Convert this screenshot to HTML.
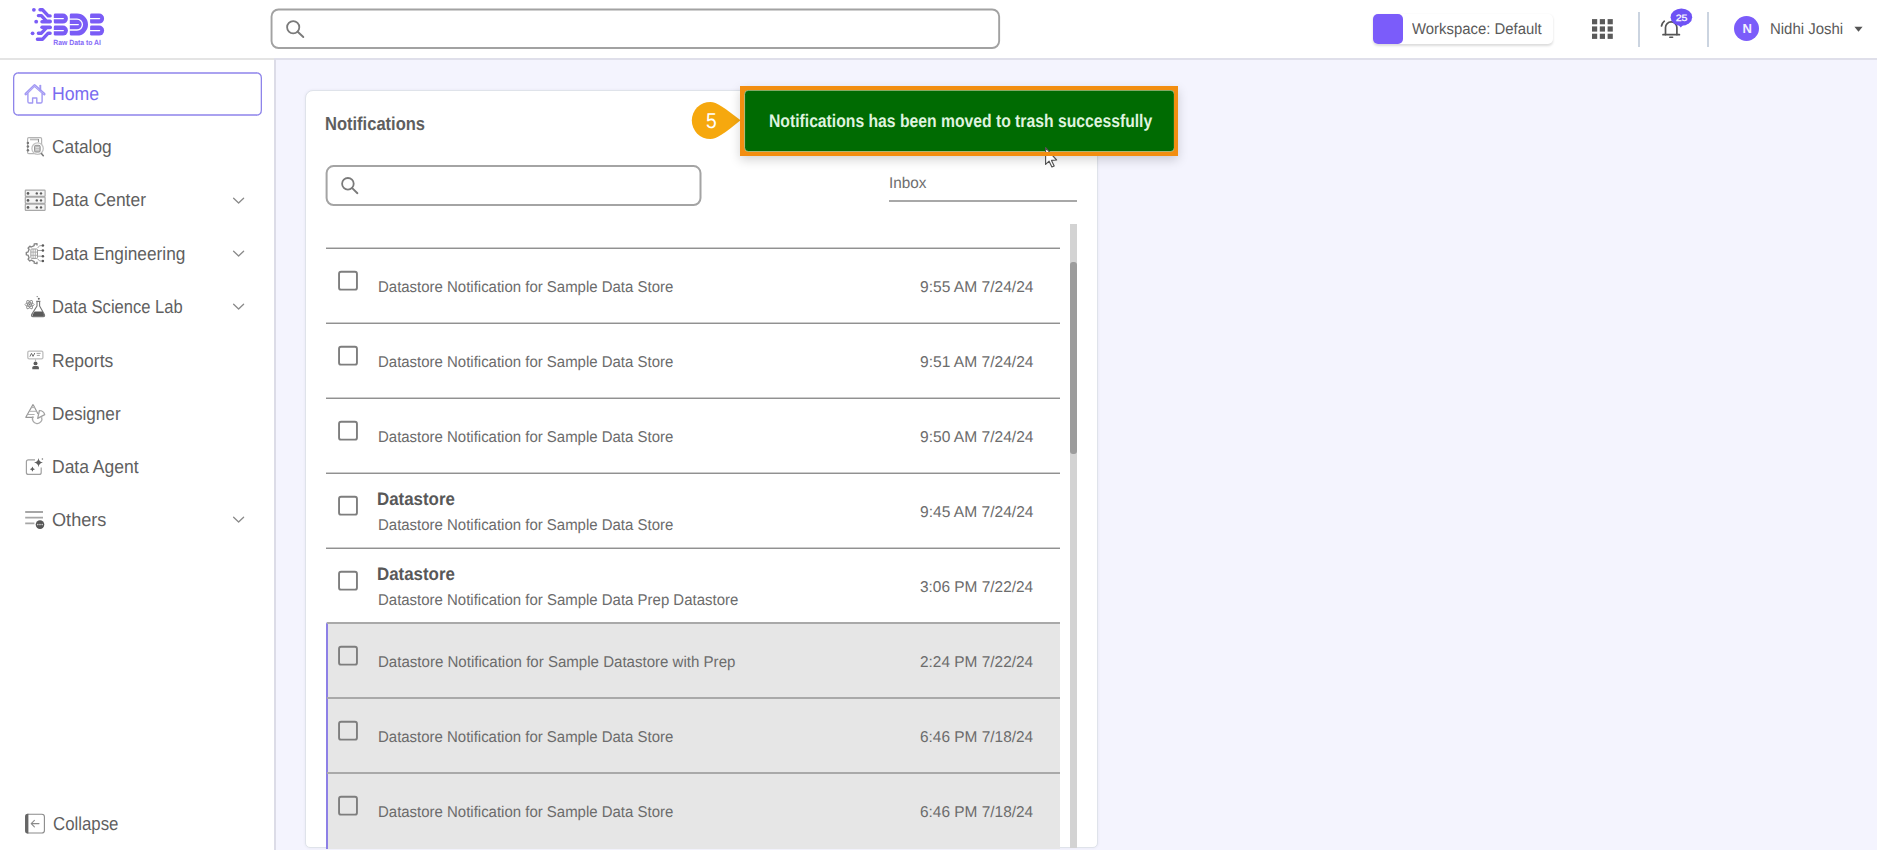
<!DOCTYPE html>
<html>
<head>
<meta charset="utf-8">
<title>Notifications</title>
<style>
*{box-sizing:border-box;margin:0;padding:0}
html,body{width:1877px;height:850px;overflow:hidden}
body{font-family:"Liberation Sans",sans-serif;text-rendering:geometricPrecision;background:#f4f4fe;position:relative;color:#666}
.a{position:absolute}
.t{position:absolute;white-space:nowrap;transform-origin:0 50%}
svg{position:absolute;overflow:visible}
#header{left:0;top:0;width:1877px;height:58px;background:#fff}
#hline{left:0;top:58px;width:1877px;height:2px;background:#dfdfea}
#hline2{left:0;top:58px;width:274px;height:2px;background:#e4e4e4}
#sidebar{left:0;top:60px;width:274px;height:790px;background:#fff}
#sline{left:274px;top:59px;width:2px;height:791px;background:#dcdce7}
#card{left:305px;top:89.5px;width:792.5px;height:758.5px;background:#fff;border:1.5px solid #dfe3ea;border-radius:8px 8px 5px 5px;box-shadow:0 0 3px rgba(40,40,80,.07)}
.l1{left:326px;width:734px;height:1px;background:rgba(0,0,0,.2)}
.l2{left:326px;width:734px;height:1px;background:rgba(0,0,0,.43)}
.g1{left:327px;width:733px;height:2px;background:#a9a9a9}
.rowbg{left:327px;width:733px;background:#e6e6e6}
.rowbar{left:326px;width:2.2px;background:#8d80e6;border-radius:2px 0 0 0}
#track{left:1070px;top:224px;width:7px;height:624px;background:#d3d3d3}
#thumb{left:1070px;top:262px;width:7px;height:191.5px;background:#9c9c9c;border-radius:3px}
#inboxline{left:889px;top:200px;width:188px;height:2px;background:#a8a8a8}
#wschip{left:1373px;top:14px;width:179.5px;height:30px;background:#fff;border-radius:5px;box-shadow:0 1.5px 2.5px rgba(0,0,0,.14)}
#wssq{left:1373px;top:13.5px;width:30px;height:30px;background:#7b5cfa;border-radius:5px}
.vdiv{top:11.5px;width:2.4px;height:35px;background:#cbd4e0}
#avatar{left:1734px;top:16.3px;width:25px;height:25px;border-radius:50%;background:#7b5cfa}
#toastout{left:740px;top:86px;width:438px;height:70px;background:#f28e10;box-shadow:0 4px 10px rgba(0,0,0,.17)}

</style>
</head>
<body>
<div id="header" class="a"></div><div id="hline" class="a"></div><div id="hline2" class="a"></div>
<div id="sidebar" class="a"></div><div id="sline" class="a"></div>
<svg style="left:0;top:0" width="1877" height="130" viewBox="0 0 1877 130">
 <rect x="271.55" y="9.45" width="727.6" height="38.6" rx="7" fill="#fff" stroke="#a2a2a2" stroke-width="1.9"/>
 <rect x="13.9" y="73.05" width="247.2" height="41.9" rx="5" fill="#fff" stroke="none"/>
 <path d="M18.5 73.05 H256.5 M18.5 114.95 H256.5" stroke="#aaa2f0" stroke-width="1.9" fill="none"/>
 <path d="M19 72.85 Q13.65 72.85 13.65 78 V110 Q13.65 115.15 19 115.15 M256 72.85 Q261.35 72.85 261.35 78 V110 Q261.35 115.15 256 115.15" stroke="#8e84ea" stroke-width="1.3" fill="none"/>
</svg>
<div id="card" class="a"></div><svg style="left:320px;top:160px" width="390" height="50" viewBox="320 160 390 50">
 <rect x="326.6" y="166.1" width="373.9" height="38.9" rx="7" fill="#fff" stroke="#a4a4a4" stroke-width="2"/>
</svg><div id="inboxline" class="a"></div>
<div class="a rowbg" style="top:622px;height:227px"></div><div class="a rowbar" style="top:622px;height:227px"></div>
<div class="a l1" style="top:247px"></div><div class="a l2" style="top:248px"></div>
<div class="a l1" style="top:322px"></div><div class="a l2" style="top:323px"></div>
<div class="a l1" style="top:397px"></div><div class="a l2" style="top:398px"></div>
<div class="a l1" style="top:472px"></div><div class="a l2" style="top:473px"></div>
<div class="a l1" style="top:547px"></div><div class="a l2" style="top:548px"></div>
<div class="a g1" style="top:622px"></div>
<div class="a g1" style="top:697px"></div>
<div class="a g1" style="top:772px"></div>
<svg style="left:330px;top:240px" width="40" height="610" viewBox="330 240 40 610"><g fill="none" stroke="#7e7e7e" stroke-width="1.9"><rect x="339.05" y="271.75" width="17.9" height="17.9" rx="2"/><rect x="339.05" y="346.75" width="17.9" height="17.9" rx="2"/><rect x="339.05" y="421.75" width="17.9" height="17.9" rx="2"/><rect x="339.05" y="496.75" width="17.9" height="17.9" rx="2"/><rect x="339.05" y="571.75" width="17.9" height="17.9" rx="2"/><rect x="339.05" y="646.75" width="17.9" height="17.9" rx="2"/><rect x="339.05" y="721.75" width="17.9" height="17.9" rx="2"/><rect x="339.05" y="796.75" width="17.9" height="17.9" rx="2"/></g></svg>
<div id="track" class="a"></div><div id="thumb" class="a"></div>
<div id="wschip" class="a"></div><div id="wssq" class="a"></div>
<div class="a vdiv" style="left:1637.8px"></div><div class="a vdiv" style="left:1706.8px"></div>
<div id="avatar" class="a"></div>
<svg style="left:688px;top:98px" width="56" height="46" viewBox="688 98 56 46">
 <path d="M710.4 101.9 C716.5 101.9 724.5 107.5 740.6 120.3 C724.5 133.3 716.5 139.1 710.4 139.1 A18.6 18.6 0 0 1 710.4 101.9Z" fill="#f6a80e"/>
</svg>
<div id="toastout" class="a"></div><svg style="left:740px;top:86px" width="438" height="70" viewBox="740 86 438 70">
 <rect x="744.6" y="90.3" width="429.7" height="61.3" rx="4" fill="#006b02" stroke="#d6e4cf" stroke-width=".6"/>
</svg>
<!--ICONS--><!-- logo -->
<svg style="left:0;top:0" width="120" height="58" viewBox="0 0 120 58">
 <g fill="#7a5cf6">
  <circle cx="33.9" cy="9.8" r="1.9"/><circle cx="36.2" cy="21.7" r="1.9"/><circle cx="32.6" cy="33.3" r="1.9"/>
 </g>
 <g fill="none" stroke="#7a5cf6" stroke-width="3.4" stroke-linecap="round" stroke-linejoin="round">
  <path d="M40 9.8 H42.6 L48.2 15.9 H50.1"/>
  <path d="M38.4 15.6 H41.4 L46.6 21.3 H50.1"/>
  <path d="M42 21.7 H50.1"/>
  <path d="M42 27.3 H50.1"/>
  <path d="M38.4 33.2 H41.4 L46.6 27.6 H50.1"/>
  <path d="M37.4 39.2 H42.6 L48.2 33.2 H50.1"/>
 </g>
 <g fill="#7a5cf6">
  <path d="M55.2 13.6 H62.9 a5 5 0 0 1 0 10 H55.2 a1.4 1.4 0 0 1 -1.4 -1.4 V15 a1.4 1.4 0 0 1 1.4 -1.4z"/>
  <path d="M55.2 25.6 H62.9 a5 5 0 0 1 0 10 H55.2 a1.4 1.4 0 0 1 -1.4 -1.4 V27 a1.4 1.4 0 0 1 1.4 -1.4z"/>
  <path d="M91.5 13.6 H99.1 a5 5 0 0 1 0 10 H91.5 a1.4 1.4 0 0 1 -1.4 -1.4 V15 a1.4 1.4 0 0 1 1.4 -1.4z"/>
  <path d="M91.5 25.6 H99.1 a5 5 0 0 1 0 10 H91.5 a1.4 1.4 0 0 1 -1.4 -1.4 V27 a1.4 1.4 0 0 1 1.4 -1.4z"/>
  <path d="M71.2 13.6 H77 a11 11 0 0 1 0 22 H71.2 a1.4 1.4 0 0 1 -1.4 -1.4 V15 a1.4 1.4 0 0 1 1.4 -1.4z"/>
 </g>
 <g fill="none" stroke="#fff" stroke-width="1.3" stroke-linecap="round">
  <path d="M53.5 18.6 H63.3"/><path d="M53.5 30.6 H63.3"/>
  <path d="M89.8 18.6 H99.6"/><path d="M89.8 30.6 H99.6"/>
  <path d="M69.5 19.2 H77 a5.4 5.4 0 0 1 0 10.8 H69.5"/>
  <path d="M69.5 24.6 H78.3"/>
 </g>
 <text x="53.3" y="44.6" font-family="Liberation Sans, sans-serif" font-size="7.5" font-weight="bold" fill="#8468f7" textLength="47.6" lengthAdjust="spacingAndGlyphs">Raw Data to AI</text>
</svg>

<!-- header search magnifier -->
<svg style="left:283px;top:17px" width="24" height="24" viewBox="283 17 24 24">
 <circle cx="293.2" cy="27.2" r="6.1" fill="none" stroke="#7a7a7a" stroke-width="1.8"/>
 <path d="M297.7 31.7 L303.3 37" stroke="#7a7a7a" stroke-width="1.9" stroke-linecap="round"/>
</svg>
<!-- notif search magnifier -->
<svg style="left:338px;top:174px" width="24" height="24" viewBox="338 174 24 24">
 <circle cx="347.9" cy="183.8" r="5.8" fill="none" stroke="#7a7a7a" stroke-width="1.8"/>
 <path d="M352.2 188.1 L357.4 193.2" stroke="#7a7a7a" stroke-width="1.9" stroke-linecap="round"/>
</svg>

<!-- grid -->
<svg style="left:1590px;top:17px" width="26" height="24" viewBox="1590 17 26 24">
 <g fill="#5a5a5a">
  <rect x="1592" y="19.1" width="5.2" height="5.2"/><rect x="1599.8" y="19.1" width="5.2" height="5.2"/><rect x="1607.6" y="19.1" width="5.2" height="5.2"/>
  <rect x="1592" y="26.4" width="5.2" height="5.2"/><rect x="1599.8" y="26.4" width="5.2" height="5.2"/><rect x="1607.6" y="26.4" width="5.2" height="5.2"/>
  <rect x="1592" y="33.7" width="5.2" height="5.2"/><rect x="1599.8" y="33.7" width="5.2" height="5.2"/><rect x="1607.6" y="33.7" width="5.2" height="5.2"/>
 </g>
</svg>

<!-- bell + badge -->
<svg style="left:1655px;top:5px" width="44" height="40" viewBox="1655 5 44 40">
 <g fill="none" stroke="#555" stroke-width="1.7" stroke-linecap="round">
  <path d="M1665.5 34.6 V27.6 a5.7 5.7 0 0 1 11.4 0 V34.6"/>
  <path d="M1663 34.7 H1679.4"/>
  <path d="M1661.5 26 Q1662.3 22.8 1664.3 21.2"/>
  <path d="M1669.8 37.3 H1672.6" stroke-width="1.6"/>
 </g>
 <ellipse cx="1681.4" cy="17.2" rx="10.8" ry="8.6" fill="#6e52f5"/>
 <path d="M1678.5 25 L1680.8 27.4 L1683 25z" fill="#6e52f5"/>
 <text x="1675.7" y="20.5" font-family="Liberation Sans, sans-serif" font-size="9.2" fill="#fff" stroke="#fff" stroke-width=".25" textLength="11.8" lengthAdjust="spacingAndGlyphs">25</text>
</svg>

<!-- avatar N -->
<svg style="left:1734px;top:16px" width="26" height="26" viewBox="1734 16 26 26">
 <text x="1742.6" y="32.6" font-family="Liberation Sans, sans-serif" font-size="13" font-weight="bold" fill="#f3efff" textLength="9.4" lengthAdjust="spacingAndGlyphs">N</text>
</svg>
<!-- caret -->
<svg style="left:1850px;top:24px" width="16" height="10" viewBox="1850 24 16 10">
 <path d="M1854.4 26.7 H1862.6 L1858.5 31.8z" fill="#555"/>
</svg>
<!-- home icon -->
<svg style="left:22px;top:82px" width="26" height="24" viewBox="22 82 26 24">
 <g fill="none" stroke="#a198f3" stroke-linecap="round" stroke-linejoin="round">
  <path d="M25.8 94 L34.6 85.4 L44.2 94" stroke-width="2.7"/>
  <path d="M26.2 94 L34.6 85.8 L43.8 94" stroke="#cfc9fa" stroke-width=".7"/>
  <path d="M40.3 85.6 V90" stroke-width="1.9"/>
  <path d="M27.9 93.6 V101.4 Q27.9 103 29.5 103 H32.6 V98 H36.8 V103 H40.5 Q42.1 103 42.1 101.4 V93.6" stroke-width="1.4"/>
 </g>
</svg>
<!-- catalog icon -->
<svg style="left:24px;top:136px" width="22" height="22" viewBox="24 136 22 22">
 <rect x="27.6" y="137.6" width="14" height="16.1" rx="1.2" fill="none" stroke="#b4b4b4" stroke-width="1.2"/>
 <path d="M30 139.5 H38.6" stroke="#bdbdbd" stroke-width="1.7" fill="none"/>
 <path d="M38.5 139 V142.3" stroke="#909090" stroke-width="1.1" fill="none"/>
 <circle cx="37.6" cy="148.6" r="5.7" fill="#fff" stroke="#c2c2c2" stroke-width="1.3"/>
 <rect x="34.5" y="145.3" width="5.7" height="6.8" rx="1.3" fill="#bcbcbc" stroke="#8e8e8e" stroke-width=".9"/>
 <path d="M35.6 147.6 H39.1 M35.6 149.8 H39.1" stroke="#e4e4e4" stroke-width=".9" fill="none"/>
 <path d="M41.4 153.5 L43.3 155.7" stroke="#7a7a7a" stroke-width="1.6" stroke-linecap="round" fill="none"/>
 <g fill="#787878"><circle cx="27.9" cy="142.9" r="1.25"/><circle cx="27.9" cy="146.6" r="1.25"/><circle cx="27.9" cy="150.2" r="1.25"/></g>
</svg>
<!-- data center icon -->
<svg style="left:24px;top:188px" width="24" height="24" viewBox="24 188 24 24">
 <g fill="#f4f4f4" stroke="#a8a8a8" stroke-width="1.2">
  <rect x="25.3" y="190.2" width="19.8" height="6.2" rx=".6"/>
  <rect x="25.3" y="197.2" width="19.8" height="6.2" rx=".6"/>
  <rect x="25.3" y="204.2" width="19.8" height="6.2" rx=".6"/>
 </g>
 <g fill="#5c5c5c">
  <circle cx="28" cy="193.4" r="1.35"/><circle cx="36.8" cy="193.4" r="1.2"/><circle cx="41" cy="193.4" r="1.2"/>
  <circle cx="28" cy="200.4" r="1.35"/><circle cx="36.8" cy="200.4" r="1.2"/><circle cx="41" cy="200.4" r="1.2"/>
  <circle cx="28" cy="207.4" r="1.35"/><circle cx="36.8" cy="207.4" r="1.2"/><circle cx="41" cy="207.4" r="1.2"/>
 </g>
</svg>
<!-- data engineering icon -->
<svg style="left:24px;top:242px" width="22" height="24" viewBox="24 242 22 24">
 <path d="M37.0 245.1 L37.0 243.6 L34.2 244.0 L34.2 245.6 L31.3 247.0 L29.8 246.2 L28.0 248.1 L29.1 249.3 L28.0 252.1 L26.3 252.4 L26.3 254.8 L28.0 255.1 L29.1 257.9 L28.0 259.1 L29.8 261.0 L31.3 260.2 L34.2 261.6 L34.2 263.2 L37.0 263.6 L37.0 262.1" fill="none" stroke="#858585" stroke-width="1.35" stroke-linejoin="round" stroke-linecap="round"/>
 <rect x="30.9" y="249" width="6.6" height="9.4" rx=".8" fill="#fff" stroke="#9a9a9a" stroke-width="1"/>
 <path d="M30.9 252.1 H37.5 M30.9 255.3 H37.5 M33.1 249 V258.4 M35.3 249 V258.4" stroke="#a8a8a8" stroke-width=".9" fill="none"/>
 <path d="M37.6 248 L39.6 245.7 H42 M37.8 250.5 H42 M37.8 256.2 H42 M37.6 258.8 L39.6 261 H42" stroke="#9a9a9a" stroke-width=".9" fill="none"/>
 <g fill="#585858"><circle cx="42.9" cy="245.6" r="1.25"/><circle cx="42.9" cy="250.4" r="1.25"/><circle cx="42.9" cy="256.2" r="1.25"/><circle cx="42.9" cy="261" r="1.25"/></g>
</svg>
<!-- data science lab icon -->
<svg style="left:24px;top:294px" width="24" height="26" viewBox="24 294 24 26">
 <g fill="none" stroke="#8c8c8c" stroke-width=".9">
  <ellipse cx="29.6" cy="304.6" rx="4.6" ry="1.8"/>
  <ellipse cx="29.6" cy="304.6" rx="4.6" ry="1.8" transform="rotate(60 29.6 304.6)"/>
  <ellipse cx="29.6" cy="304.6" rx="4.6" ry="1.8" transform="rotate(120 29.6 304.6)"/>
 </g>
 <circle cx="29.6" cy="304.6" r="1" fill="#777"/>
 <path d="M36.2 301.4 H40.4 M37 301.6 V306 L31.6 314.6 Q31 316.6 33 316.6 H43.2 Q45.2 316.6 44.4 314.6 L39.6 306 V301.6" fill="#fff" stroke="#777" stroke-width="1.1" stroke-linejoin="round"/>
 <path d="M34.6 311.6 H42.6 L44 314.4 Q44.6 316 43 316 H33.2 Q31.8 316 32.6 314.4z" fill="#5a5a5a"/>
 <circle cx="38.8" cy="298.8" r="1" fill="#666"/><circle cx="37.2" cy="296.6" r=".7" fill="#777"/>
</svg>
<!-- reports icon -->
<svg style="left:24px;top:348px" width="22" height="24" viewBox="24 348 22 24">
 <rect x="27.8" y="351.1" width="15.1" height="7.8" rx="1.4" fill="#fff" stroke="#bdbdbd" stroke-width="1.3"/>
 <path d="M29.9 356.6 L31.5 353.3 L33 356.4 L34.8 353" fill="none" stroke="#707070" stroke-width="1" stroke-linejoin="round"/>
 <path d="M36.6 353.4 H40.6 M36.8 355.4 H39.9" stroke="#a0a0a0" stroke-width="1" fill="none"/>
 <path d="M35.5 359.4 V361.2" stroke="#b0b0b0" stroke-width="1.1"/>
 <circle cx="35.5" cy="363.4" r="1.95" fill="#5c5c5c"/>
 <path d="M32.3 369.3 V367.6 Q32.3 366 34 366 H37.2 Q38.9 366 38.9 367.6 V369.3z" fill="#5c5c5c"/>
</svg>
<!-- designer icon -->
<svg style="left:24px;top:402px" width="24" height="24" viewBox="24 402 24 24">
 <g fill="none" stroke="#979797" stroke-width="1.15" stroke-linejoin="round">
  <path d="M33.1 404.4 L25.8 417.3 H33.4 M33.1 404.4 L38 414"/>
  <path d="M31.4 407.6 H34.8 M29.4 411.3 H36.6 M27.6 414.5 H34.6" stroke="#b0b0b0" stroke-width="1"/>
  <path d="M33.2 416.4 A4.7 4.7 0 1 0 41.6 417.2" stroke="#a8a8a8" stroke-width="1.3"/>
  <path d="M37.7 418.4 L39.4 410.5 A5.6 5.6 0 0 1 44.7 414.6z" fill="#fff" stroke="#a0a0a0" stroke-width="1.25"/>
 </g>
</svg>
<!-- data agent icon -->
<svg style="left:24px;top:456px" width="22" height="22" viewBox="24 456 22 22">
 <path d="M35 459.8 H28.4 a2 2 0 0 0 -2 2 V472.4 a2 2 0 0 0 2 2 H39.2 a2 2 0 0 0 2 -2 V467.4" fill="none" stroke="#a0a0a0" stroke-width="1.2"/>
 <path d="M38.5 458 Q39 462 43 462.6 Q39 463.2 38.5 467.2 Q38 463.2 34 462.6 Q38 462 38.5 458z" fill="#5e5e5e"/>
 <path d="M32.4 466.6 Q32.7 468.8 35 469.2 Q32.7 469.6 32.4 471.8 Q32.1 469.6 29.8 469.2 Q32.1 468.8 32.4 466.6z" fill="#5e5e5e"/>
 <circle cx="42.4" cy="459" r=".8" fill="#777"/>
</svg>
<!-- others icon -->
<svg style="left:24px;top:508px" width="24" height="24" viewBox="24 508 24 24">
 <path d="M25.2 512 H43 M25.2 517.6 H43 M25.2 523.4 H34.4" stroke="#a6a6a6" stroke-width="1.9"/>
 <circle cx="40" cy="524.6" r="4.3" fill="#565656"/>
 <g fill="#cfcfcf"><circle cx="37.8" cy="524.6" r=".8"/><circle cx="40" cy="524.6" r=".8"/><circle cx="42.2" cy="524.6" r=".8"/></g>
</svg>
<!-- collapse icon -->
<svg style="left:24px;top:812px" width="22" height="24" viewBox="24 812 22 24">
 <rect x="25.6" y="814.2" width="18.8" height="18.8" rx="2.6" fill="#fff" stroke="#8a8a8a" stroke-width="1.1"/>
 <path d="M27.6 813.8 a2.6 2.6 0 0 0 -2.5 2.6 V830.8 a2.6 2.6 0 0 0 2.5 2.6 H28.4 V813.8z" fill="#666"/>
 <path d="M39 823.6 H31.4 M34.4 820.4 L31.2 823.6 L34.4 826.8" fill="none" stroke="#8a8a8a" stroke-width="1.1" stroke-linecap="round" stroke-linejoin="round"/>
</svg>
<!-- chevrons -->
<svg style="left:230px;top:190px" width="18" height="340" viewBox="230 190 18 340">
 <g fill="none" stroke="#8a8a8a" stroke-width="1.3" stroke-linecap="round" stroke-linejoin="round">
  <path d="M233.6 198.2 L238.6 203 L243.6 198.2"/>
  <path d="M233.6 251.2 L238.6 256 L243.6 251.2"/>
  <path d="M233.6 304.2 L238.6 309 L243.6 304.2"/>
  <path d="M233.6 517.2 L238.6 522 L243.6 517.2"/>
 </g>
</svg>

<div class="t" style="left:51.85px;top:82px;height:24px;line-height:24px;font-size:18.74px;color:#7a6bf0;transform:scaleX(0.9442)">Home</div>
<div class="t" style="left:52.32px;top:135px;height:24px;line-height:24px;font-size:18.74px;color:#5f5f5f;transform:scaleX(0.9250)">Catalog</div>
<div class="t" style="left:51.86px;top:188px;height:24px;line-height:24px;font-size:18.74px;color:#5f5f5f;transform:scaleX(0.9299)">Data Center</div>
<div class="t" style="left:51.90px;top:242px;height:24px;line-height:24px;font-size:18.74px;color:#5f5f5f;transform:scaleX(0.9209)">Data Engineering</div>
<div class="t" style="left:51.98px;top:295px;height:24px;line-height:24px;font-size:18.74px;color:#5f5f5f;transform:scaleX(0.8837)">Data Science Lab</div>
<div class="t" style="left:52.06px;top:349px;height:24px;line-height:24px;font-size:18.74px;color:#5f5f5f;transform:scaleX(0.9338)">Reports</div>
<div class="t" style="left:51.90px;top:402px;height:24px;line-height:24px;font-size:18.74px;color:#5f5f5f;transform:scaleX(0.9148)">Designer</div>
<div class="t" style="left:51.86px;top:455px;height:24px;line-height:24px;font-size:18.74px;color:#5f5f5f;transform:scaleX(0.9335)">Data Agent</div>
<div class="t" style="left:52.35px;top:508px;height:24px;line-height:24px;font-size:18.74px;color:#5f5f5f;transform:scaleX(0.9675)">Others</div>
<div class="t" style="left:52.69px;top:812px;height:24px;line-height:24px;font-size:18.74px;color:#5f5f5f;transform:scaleX(0.8979)">Collapse</div>
<div class="t" style="left:1412.31px;top:20px;height:20px;line-height:20px;font-size:15.61px;color:#5a5a5a;transform:scaleX(0.9544)">Workspace: Default</div>
<div class="t" style="left:1770.48px;top:20px;height:20px;line-height:20px;font-size:15.61px;color:#5a5a5a;transform:scaleX(0.9574)">Nidhi Joshi</div>
<div class="t" style="left:325.10px;top:112px;height:24px;line-height:24px;font-size:18.74px;font-weight:bold;color:#5e5e5e;transform:scaleX(0.8817)">Notifications</div>
<div class="t" style="left:888.53px;top:174px;height:20px;line-height:20px;font-size:15.61px;color:#6e6e6e;transform:scaleX(0.9822)">Inbox</div>
<div class="t" style="left:768.59px;top:109px;height:24px;line-height:24px;font-size:18.22px;font-weight:bold;color:#dff3df;transform:scaleX(0.8629)">Notifications has been moved to trash successfully</div>
<div class="t" style="left:705.84px;top:107px;height:28px;line-height:28px;font-size:21.44px;color:#fff;transform:scaleX(0.9000)">5</div>
<div class="t" style="left:378.08px;top:278px;height:20px;line-height:20px;font-size:15.61px;color:#6c6c6c;transform:scaleX(0.9587)">Datastore Notification for Sample Data Store</div>
<div class="t" style="left:920.35px;top:278px;height:20px;line-height:20px;font-size:15.61px;color:#6c6c6c;transform:scaleX(0.9982)">9:55 AM 7/24/24</div>
<div class="t" style="left:378.08px;top:353px;height:20px;line-height:20px;font-size:15.61px;color:#6c6c6c;transform:scaleX(0.9587)">Datastore Notification for Sample Data Store</div>
<div class="t" style="left:920.35px;top:353px;height:20px;line-height:20px;font-size:15.61px;color:#6c6c6c;transform:scaleX(0.9982)">9:51 AM 7/24/24</div>
<div class="t" style="left:378.08px;top:428px;height:20px;line-height:20px;font-size:15.61px;color:#6c6c6c;transform:scaleX(0.9587)">Datastore Notification for Sample Data Store</div>
<div class="t" style="left:920.35px;top:428px;height:20px;line-height:20px;font-size:15.61px;color:#6c6c6c;transform:scaleX(0.9982)">9:50 AM 7/24/24</div>
<div class="t" style="left:377.27px;top:488px;height:23px;line-height:23px;font-size:18.01px;font-weight:bold;color:#585858;transform:scaleX(0.9378)">Datastore</div>
<div class="t" style="left:378.08px;top:516px;height:20px;line-height:20px;font-size:15.61px;color:#6c6c6c;transform:scaleX(0.9587)">Datastore Notification for Sample Data Store</div>
<div class="t" style="left:920.35px;top:503px;height:20px;line-height:20px;font-size:15.61px;color:#6c6c6c;transform:scaleX(0.9982)">9:45 AM 7/24/24</div>
<div class="t" style="left:377.27px;top:563px;height:23px;line-height:23px;font-size:18.01px;font-weight:bold;color:#585858;transform:scaleX(0.9378)">Datastore</div>
<div class="t" style="left:378.08px;top:591px;height:20px;line-height:20px;font-size:15.61px;color:#6c6c6c;transform:scaleX(0.9590)">Datastore Notification for Sample Data Prep Datastore</div>
<div class="t" style="left:920.32px;top:578px;height:20px;line-height:20px;font-size:15.61px;color:#6c6c6c;transform:scaleX(0.9880)">3:06 PM 7/22/24</div>
<div class="t" style="left:378.08px;top:653px;height:20px;line-height:20px;font-size:15.61px;color:#6c6c6c;transform:scaleX(0.9647)">Datastore Notification for Sample Datastore with Prep</div>
<div class="t" style="left:920.31px;top:653px;height:20px;line-height:20px;font-size:15.61px;color:#6c6c6c;transform:scaleX(0.9880)">2:24 PM 7/22/24</div>
<div class="t" style="left:378.08px;top:728px;height:20px;line-height:20px;font-size:15.61px;color:#6c6c6c;transform:scaleX(0.9587)">Datastore Notification for Sample Data Store</div>
<div class="t" style="left:920.30px;top:728px;height:20px;line-height:20px;font-size:15.61px;color:#6c6c6c;transform:scaleX(0.9882)">6:46 PM 7/18/24</div>
<div class="t" style="left:378.08px;top:803px;height:20px;line-height:20px;font-size:15.61px;color:#6c6c6c;transform:scaleX(0.9587)">Datastore Notification for Sample Data Store</div>
<div class="t" style="left:920.30px;top:803px;height:20px;line-height:20px;font-size:15.61px;color:#6c6c6c;transform:scaleX(0.9882)">6:46 PM 7/18/24</div>
<!-- cursor -->
<svg style="left:1042px;top:144px" width="20" height="28" viewBox="1042 144 20 28">
 <path d="M1045.6 147.6 V164.4 L1049.1 161.2 L1051.9 167 L1054.2 166 L1051.5 160.4 L1056.6 160 Z" fill="#fff" stroke="#505050" stroke-width="1.15" stroke-linejoin="round"/>
</svg>
<div class="a" style="left:740px;top:86px;width:438px;height:70px;border:4px solid #f28e10;border-bottom-width:4.4px"></div>

</body>
</html>
